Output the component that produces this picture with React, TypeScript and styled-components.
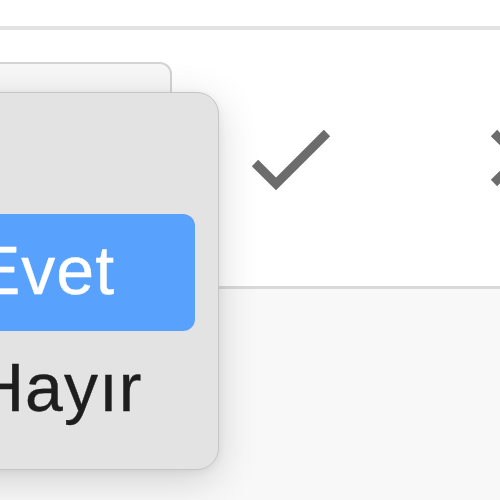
import React from 'react';
import styled, { createGlobalStyle } from 'styled-components';

const GlobalStyle = createGlobalStyle`
  html, body {
    margin: 0;
    padding: 0;
    background: #f8f8f8;
    overflow: hidden;
  }
  body {
    font-family: "Liberation Sans", Arial, sans-serif;
  }
`;

const Page = styled.div`
  width: 500px;
  height: 500px;
  overflow: hidden;
  background: #f8f8f8;
`;

const TopStrip = styled.div`
  height: 26px;
  background: #fff;
  border-bottom: 4px solid #e3e3e3;
`;

const Row = styled.div`
  height: 256px;
  background: #fff;
  border-bottom: 3px solid #d9d9d9;
  display: flex;
  align-items: center;
`;

const SelectCell = styled.div`
  position: relative;
  flex: none;
  width: 240px;
  margin-left: -68px;
  height: 192px;
`;

const SelectButton = styled.div`
  box-sizing: border-box;
  width: 100%;
  height: 100%;
  background: #f7f7f7;
  border: 2px solid #d3d3d3;
  border-radius: 12px;
`;

const Menu = styled.ul`
  position: absolute;
  top: 30px;
  left: -13px;
  width: 300px;
  box-sizing: border-box;
  margin: 0;
  padding: 4px 23px 21px 0;
  list-style: none;
  background: #e3e3e3;
  border: 1.5px solid #c6c6c6;
  border-radius: 22px;
  box-shadow: 0 10px 40px rgba(0, 0, 0, 0.16), 0 2px 8px rgba(0, 0, 0, 0.06);
  z-index: 2;
`;

const MenuItem = styled.li<{ $active?: boolean }>`
  box-sizing: border-box;
  height: 117px;
  display: flex;
  align-items: center;
  padding: 0 0 5px 55px;
  font-size: 68px;
  letter-spacing: 1px;
  -webkit-text-stroke: 0.4px ${(p) => (p.$active ? '#fff' : '#1e1e1e')};
  border-radius: 0 12px 12px 0;
  color: ${(p) => (p.$active ? '#fff' : '#1e1e1e')};
  background: ${(p) => (p.$active ? '#58a1fd' : 'transparent')};
`;

const IconCell = styled.div`
  flex: none;
  width: 225px;
  display: flex;
  justify-content: center;
  align-items: center;
`;

const IconGroup = styled.div`
  display: flex;
  margin-left: 6px;
`;

const CheckIcon = () => (
  <svg width="90" height="90" viewBox="0 0 90 90">
    <polyline points="9,50 30,71 81,20" fill="none" stroke="#6c6c6c" strokeWidth="9" />
  </svg>
);

const CrossIcon = () => (
  <svg width="90" height="90" viewBox="0 0 90 90">
    <path d="M23 20 L73 70 M23 70 L73 20" fill="none" stroke="#6c6c6c" strokeWidth="9" />
  </svg>
);

export default function App() {
  return (
    <Page>
      <GlobalStyle />
      <TopStrip />
      <Row>
        <SelectCell>
          <SelectButton />
          <Menu>
            <MenuItem />
            <MenuItem $active>Evet</MenuItem>
            <MenuItem>Hayır</MenuItem>
          </Menu>
        </SelectCell>
        <IconGroup>
          <IconCell>
            <CheckIcon />
          </IconCell>
          <IconCell>
            <CrossIcon />
          </IconCell>
        </IconGroup>
      </Row>
    </Page>
  );
}
